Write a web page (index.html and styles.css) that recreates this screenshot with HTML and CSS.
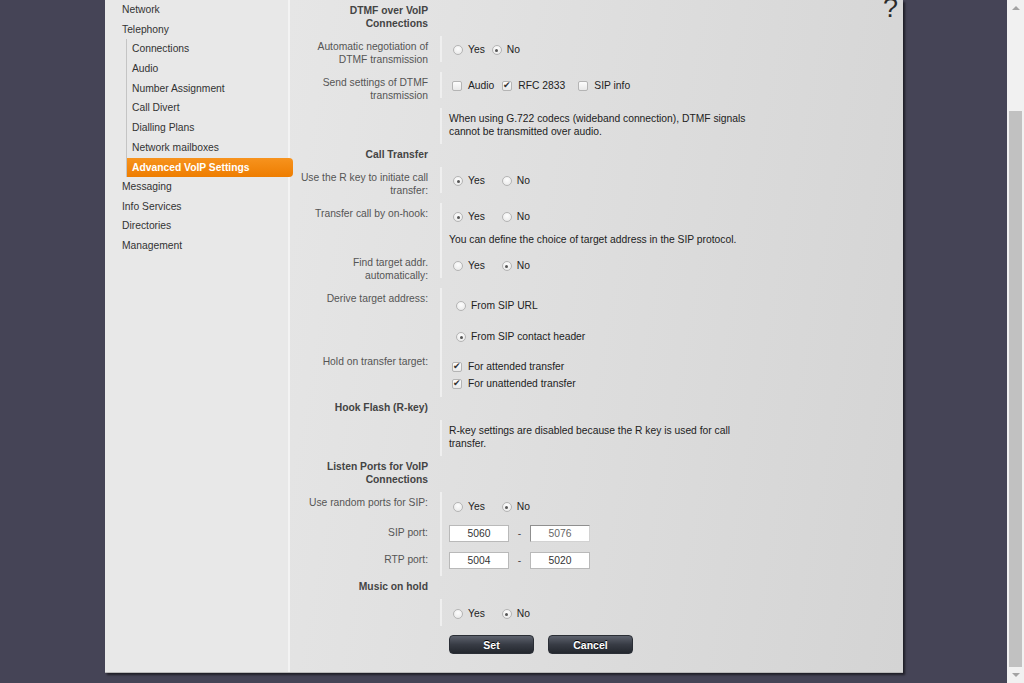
FILE: index.html
```html
<!DOCTYPE html>
<html lang="en">
<head>
  <meta charset="UTF-8" />
  <title>Advanced VoIP Settings</title>
  <link rel="stylesheet" href="styles.css">
</head>
<body>

  <div class="viewport">
    <div class="panel">

      <nav class="sidebar">
        <ul class="menu">
          <li>Network</li>
          <li>Telephony
            <ul class="submenu">
              <li>Connections</li>
              <li>Audio</li>
              <li>Number Assignment</li>
              <li>Call Divert</li>
              <li>Dialling Plans</li>
              <li>Network mailboxes</li>
              <li class="active">Advanced VoIP Settings</li>
            </ul>
          </li>
          <li>Messaging</li>
          <li>Info Services</li>
          <li>Directories</li>
          <li>Management</li>
        </ul>
      </nav>

      <main class="content">
        <span class="help">?</span>

        <!-- DTMF -->
        <div class="row head"><div class="lbl">DTMF over VoIP<br>Connections</div></div>
        <div class="row">
          <div class="lbl">Automatic negotiation of<br>DTMF transmission</div>
          <div class="val opts tight">
            <label class="opt"><span class="radio"></span>Yes</label>
            <label class="opt"><span class="radio on"></span>No</label>
          </div>
        </div>
        <div class="row">
          <div class="lbl">Send settings of DTMF<br>transmission</div>
          <div class="val opts">
            <label class="opt audio"><span class="check"></span>Audio</label>
            <label class="opt rfc"><span class="check on"></span>RFC 2833</label>
            <label class="opt"><span class="check"></span>SIP info</label>
          </div>
        </div>
        <div class="row">
          <div class="lbl"></div>
          <div class="val note">When using G.722 codecs (wideband connection), DTMF signals cannot be transmitted over audio.</div>
        </div>

        <!-- Call transfer -->
        <div class="row head"><div class="lbl">Call Transfer</div></div>
        <div class="row">
          <div class="lbl">Use the R key to initiate call<br>transfer:</div>
          <div class="val opts">
            <label class="opt yes"><span class="radio on"></span>Yes</label>
            <label class="opt"><span class="radio"></span>No</label>
          </div>
        </div>
        <div class="row">
          <div class="lbl">Transfer call by on-hook:</div>
          <div class="val opts">
            <label class="opt yes"><span class="radio on"></span>Yes</label>
            <label class="opt"><span class="radio"></span>No</label>
          </div>
        </div>
        <div class="row">
          <div class="lbl"></div>
          <div class="val note wide">You can define the choice of target address in the SIP protocol.</div>
        </div>
        <div class="row">
          <div class="lbl">Find target addr.<br>automatically:</div>
          <div class="val opts">
            <label class="opt yes"><span class="radio"></span>Yes</label>
            <label class="opt"><span class="radio on"></span>No</label>
          </div>
        </div>
        <div class="row">
          <div class="lbl">Derive target address:</div>
          <div class="val stack">
            <label class="opt line first"><span class="radio"></span>From SIP URL</label>
            <label class="opt line"><span class="radio on"></span>From SIP contact header</label>
          </div>
        </div>
        <div class="row">
          <div class="lbl">Hold on transfer target:</div>
          <div class="val checks">
            <label class="opt line"><span class="check on"></span>For attended transfer</label>
            <label class="opt line"><span class="check on"></span>For unattended transfer</label>
          </div>
        </div>

        <!-- Hook flash -->
        <div class="row head"><div class="lbl">Hook Flash (R-key)</div></div>
        <div class="row">
          <div class="lbl"></div>
          <div class="val note">R-key settings are disabled because the R key is used for call transfer.</div>
        </div>

        <!-- Listen ports -->
        <div class="row head"><div class="lbl">Listen Ports for VoIP<br>Connections</div></div>
        <div class="row">
          <div class="lbl">Use random ports for SIP:</div>
          <div class="val opts ports-toggle">
            <label class="opt yes"><span class="radio"></span>Yes</label>
            <label class="opt"><span class="radio on"></span>No</label>
          </div>
        </div>
        <div class="row port">
          <div class="lbl">SIP port:</div>
          <div class="val range">
            <input type="text" value="5060">
            <span class="dash">-</span>
            <input type="text" value="5076" class="off" disabled>
          </div>
        </div>
        <div class="row port last">
          <div class="lbl">RTP port:</div>
          <div class="val range">
            <input type="text" value="5004">
            <span class="dash">-</span>
            <input type="text" value="5020">
          </div>
        </div>

        <!-- Music on hold -->
        <div class="row head"><div class="lbl">Music on hold</div></div>
        <div class="row music">
          <div class="lbl"></div>
          <div class="val opts">
            <label class="opt yes"><span class="radio"></span>Yes</label>
            <label class="opt"><span class="radio on"></span>No</label>
          </div>
        </div>

        <div class="buttons">
          <button>Set</button>
          <button>Cancel</button>
        </div>
      </main>

    </div>
  </div>

  <div class="scrollbar">
    <span class="arrow up"></span>
    <div class="track"><div class="thumb"></div></div>
    <span class="arrow down"></span>
  </div>

</body>
</html>
```

FILE: styles.css
```css
* {
  margin: 0;
  padding: 0;
  box-sizing: border-box;
}

html, body {
  height: 100%;
  overflow: hidden;
}

body {
  display: flex;
  background: #454456;
  font-family: "Liberation Sans", Arial, sans-serif;
  font-size: 10.3px;
  color: #222;
}

.viewport {
  flex: 1;
  overflow: hidden;
}

.panel {
  display: flex;
  width: 798px;
  margin-left: 105px;
  background: #e8e8e8;
  border-bottom: 1px solid #b8b8b8;
  box-shadow: 2px 2px 2px rgba(0, 0, 0, 0.55);
}

/* ---- left menu ---- */

.sidebar {
  width: 185px;
  flex-shrink: 0;
  border-right: 2px solid #f3f3f3;
  position: relative;
  z-index: 1;
}

.menu {
  list-style: none;
  padding-left: 17px;
  line-height: 19.65px;
  color: #333;
}

.submenu {
  list-style: none;
  margin: 0 0 0 4px;
  border-left: 1px solid #c4c4c4;
}

.submenu li {
  padding-left: 5px;
}

.submenu li.active {
  margin-right: -5px;
  background: linear-gradient(#f7931e, #ee7d00);
  color: #fff;
  font-weight: bold;
  border-radius: 0 4px 4px 0;
  line-height: 19px;
  margin-top: 0.3px;
  margin-bottom: 0.3px;
}

/* ---- form ---- */

.content {
  flex: 1;
  position: relative;
  padding-bottom: 18px;
  background: linear-gradient(100deg, #e6e6e6 0%, #dedede 45%, #d4d4d4 100%);
}

.help {
  position: absolute;
  top: -7px;
  right: 5px;
  font-size: 27px;
  color: #2a2a2a;
}

.row {
  display: flex;
  line-height: 13px;
}

.lbl {
  width: 150px;
  flex-shrink: 0;
  padding: 4px 12px 6px 0;
  text-align: right;
  color: #555;
}

.head .lbl {
  font-weight: bold;
  color: #444;
}

.val {
  flex: 1;
  border-left: 2px solid #efefef;
  padding: 6px 0 4px 7px;
}

.note {
  padding-top: 4px;
  padding-bottom: 6px;
  max-width: 310px;
  color: #222;
}

.note.wide {
  max-width: none;
}

.opts {
  display: flex;
  align-items: center;
  height: 26px;
  line-height: 16px;
}

.opts.ports-toggle {
  height: 27px;
  padding-top: 7px;
}

.opt {
  display: inline-flex;
  align-items: center;
  margin-right: 13px;
}

.tight .opt {
  margin-right: 3px;
}

.opt.audio {
  margin-right: 5px;
}

.opt.rfc {
  margin-right: 10px;
}

.stack {
  padding-top: 10px;
  padding-bottom: 6px;
}

.stack .opt.line {
  display: flex;
  line-height: 16px;
}

.stack .first {
  margin-bottom: 15px;
}

.stack .radio {
  margin-left: 7px;
}

.checks {
  padding-top: 7px;
  padding-bottom: 5px;
}

.checks .opt.line {
  display: flex;
  line-height: 17px;
}

.radio {
  display: inline-block;
  width: 10px;
  height: 10px;
  margin: 0 5px 0 4px;
  border: 1px solid #b4b4b4;
  border-radius: 50%;
  background: radial-gradient(circle at 50% 35%, #fdfdfd, #e6e6e6);
  position: relative;
}

.radio.on::after {
  content: "";
  position: absolute;
  left: 2.5px;
  top: 2.5px;
  width: 3px;
  height: 3px;
  border-radius: 50%;
  background: #555;
}

.check {
  display: inline-block;
  width: 10px;
  height: 10px;
  margin: 0 6px 0 3px;
  border: 1px solid #b4b4b4;
  border-radius: 2px;
  background: linear-gradient(#fdfdfd, #e9e9e9);
  position: relative;
}

.check.on::after {
  content: "\2714";
  position: absolute;
  left: 0;
  top: -3px;
  font-size: 9px;
  line-height: 13px;
  color: #333;
}

.port .lbl {
  padding-top: 7px;
}

.range {
  display: flex;
  align-items: center;
  padding-top: 6px;
  padding-bottom: 4px;
}

.port.last .range {
  padding-bottom: 7px;
}

.range input {
  width: 60px;
  height: 17px;
  border: 1px solid #b9b9b9;
  background: #fff;
  font-family: inherit;
  font-size: 10.3px;
  color: #333;
  text-align: center;
}

.range input.off {
  border-color: #8f8f8f #d2d2d2 #d2d2d2 #8f8f8f;
  color: #666;
}

.dash {
  width: 21px;
  text-align: center;
  color: #444;
}

.music .val {
  padding-top: 7px;
  height: 27px;
}

.buttons {
  display: flex;
  gap: 14px;
  padding: 9px 0 0 159px;
}

.buttons button {
  width: 85px;
  height: 19px;
  border: 1px solid #2a2e35;
  border-radius: 4px;
  background: linear-gradient(#5d626d, #383c45 50%, #23272e);
  color: #fff;
  font-family: inherit;
  font-size: 10.5px;
  font-weight: bold;
  text-shadow: 0 -1px 0 #000;
  cursor: pointer;
}

/* ---- fake window scrollbar ---- */

.scrollbar {
  width: 17px;
  flex-shrink: 0;
  display: flex;
  flex-direction: column;
  background: #f1f1f1;
}

.arrow {
  height: 17px;
  display: flex;
  align-items: center;
  justify-content: center;
}

.arrow::before {
  content: "";
  border-left: 4px solid transparent;
  border-right: 4px solid transparent;
}

.arrow.up::before {
  border-bottom: 4px solid #a3a3a3;
}

.arrow.down::before {
  border-top: 4px solid #a3a3a3;
}

.track {
  flex: 1;
  padding: 95px 2px 0 2px;
}

.thumb {
  height: 556px;
  background: #c1c1c1;
}
```
